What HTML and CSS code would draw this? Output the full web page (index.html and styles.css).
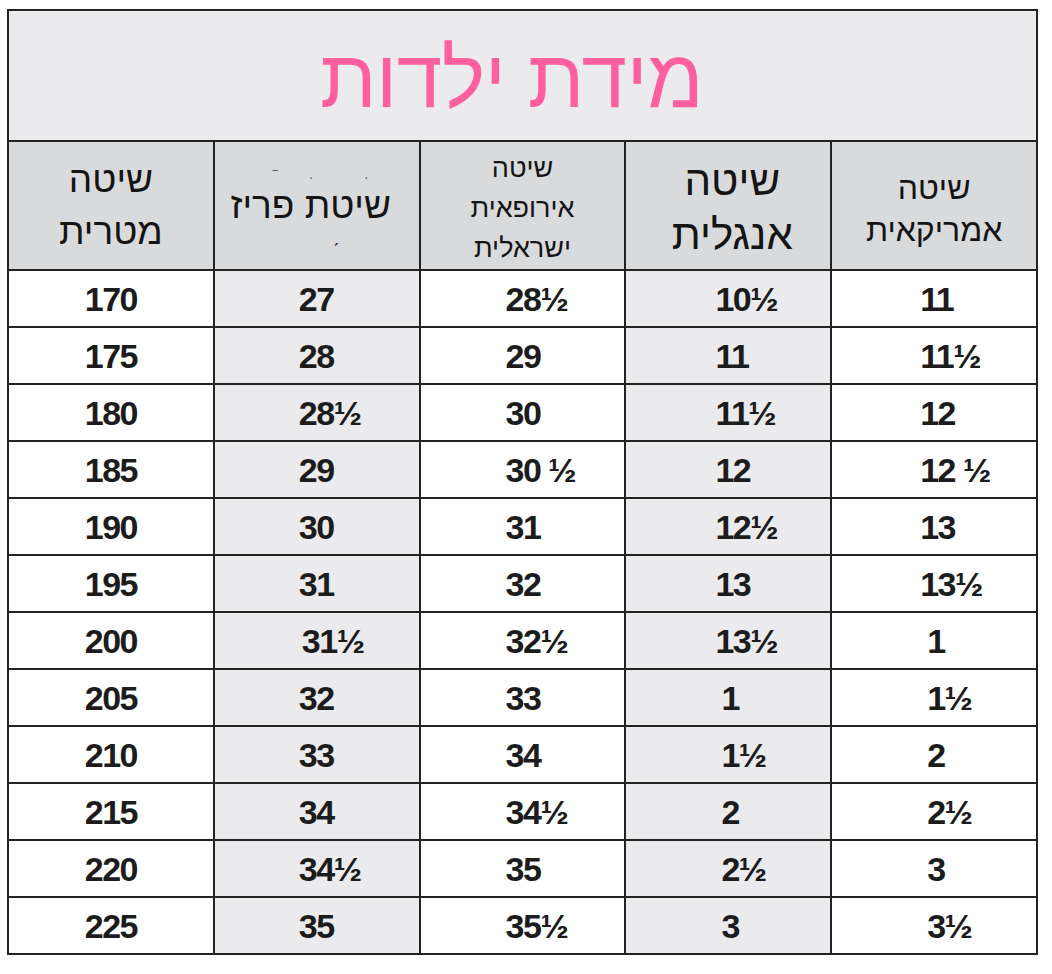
FILE: index.html
```html
<!DOCTYPE html>
<html lang="he" dir="rtl">
<head>
<meta charset="utf-8">
<title>מידת ילדות</title>
<link rel="stylesheet" href="styles.css">
</head>
<body>
<div class="chart">
  <div class="title">מידת ילדות</div>

  <div class="head head-us">שיטה<br>אמריקאית</div>
  <div class="head head-uk">שיטה<br>אנגלית</div>
  <div class="head head-eu">שיטה<br>אירופאית<br>ישראלית</div>
  <div class="head head-paris">
    <span class="marks-top">‾&nbsp;&nbsp;&nbsp;&nbsp;&nbsp;&nbsp;&nbsp;&nbsp;·&nbsp;&nbsp;&nbsp;&nbsp;&nbsp;&nbsp;&nbsp;&nbsp;&nbsp;&nbsp;&nbsp;&nbsp;&nbsp;·</span>
    <span class="paris-text">שיטת פריז</span>
    <span class="marks-bottom">ˏ</span>
  </div>
  <div class="head head-metric">שיטה<br>מטרית</div>

  <div class="cell c-us">11</div><div class="cell c-uk alt">10½</div><div class="cell c-eu">28½</div><div class="cell c-paris alt">27</div><div class="cell c-metric">170</div>
  <div class="cell c-us">11½</div><div class="cell c-uk alt">11</div><div class="cell c-eu">29</div><div class="cell c-paris alt">28</div><div class="cell c-metric">175</div>
  <div class="cell c-us">12</div><div class="cell c-uk alt">11½</div><div class="cell c-eu">30</div><div class="cell c-paris alt">28½</div><div class="cell c-metric">180</div>
  <div class="cell c-us">12 ½</div><div class="cell c-uk alt">12</div><div class="cell c-eu">30 ½</div><div class="cell c-paris alt">29</div><div class="cell c-metric">185</div>
  <div class="cell c-us">13</div><div class="cell c-uk alt">12½</div><div class="cell c-eu">31</div><div class="cell c-paris alt">30</div><div class="cell c-metric">190</div>
  <div class="cell c-us">13½</div><div class="cell c-uk alt">13</div><div class="cell c-eu">32</div><div class="cell c-paris alt">31</div><div class="cell c-metric">195</div>
  <div class="cell c-us single">1</div><div class="cell c-uk alt">13½</div><div class="cell c-eu">32½</div><div class="cell c-paris alt shift">31½</div><div class="cell c-metric">200</div>
  <div class="cell c-us single">1½</div><div class="cell c-uk alt single">1</div><div class="cell c-eu">33</div><div class="cell c-paris alt">32</div><div class="cell c-metric">205</div>
  <div class="cell c-us single">2</div><div class="cell c-uk alt single">1½</div><div class="cell c-eu">34</div><div class="cell c-paris alt">33</div><div class="cell c-metric">210</div>
  <div class="cell c-us single">2½</div><div class="cell c-uk alt single">2</div><div class="cell c-eu">34½</div><div class="cell c-paris alt">34</div><div class="cell c-metric">215</div>
  <div class="cell c-us single">3</div><div class="cell c-uk alt single">2½</div><div class="cell c-eu">35</div><div class="cell c-paris alt">34½</div><div class="cell c-metric">220</div>
  <div class="cell c-us single">3½</div><div class="cell c-uk alt single">3</div><div class="cell c-eu">35½</div><div class="cell c-paris alt">35</div><div class="cell c-metric">225</div>
</div>
</body>
</html>
```

FILE: styles.css
```css
html, body {
  margin: 0;
  padding: 0;
  background: #ffffff;
}

body {
  font-family: "Liberation Sans", "DejaVu Sans", Arial, sans-serif;
  color: #1c1c1c;
}

.chart {
  margin: 9px auto 0 7px;
  width: 1031px;
  box-sizing: border-box;
  display: grid;
  grid-template-columns: repeat(5, 1fr);
  grid-template-rows: 129px 127px repeat(12, 55px);
  gap: 2px;
  padding: 2px;
  background: #232323;
}

.title {
  grid-column: 1 / -1;
  background: #ebebed;
  color: #ff5f9e;
  font-size: 82px;
  display: flex;
  align-items: center;
  justify-content: center;
  padding-right: 22px;
  padding-top: 6px;
  box-sizing: border-box;
  letter-spacing: -0.5px;
}

.head {
  background: #d9dadc;
  display: flex;
  flex-direction: column;
  align-items: center;
  justify-content: center;
  text-align: center;
  color: #141414;
}

.head-us {
  font-size: 32px;
  line-height: 42px;
  padding-top: 6px;
  box-sizing: border-box;
}

.head-uk {
  font-size: 42px;
  line-height: 54px;
  padding-left: 8px;
  padding-top: 4px;
  box-sizing: border-box;
}

.head-eu {
  font-size: 27px;
  line-height: 40px;
  padding-top: 4px;
  box-sizing: border-box;
}

.head-metric {
  font-size: 37px;
  line-height: 52px;
  box-sizing: border-box;
}

.head-paris {
  padding-right: 12px;
  box-sizing: border-box;
}

.paris-text {
  font-size: 37px;
  line-height: 44px;
}

.marks-top {
  font-size: 14px;
  line-height: 14px;
  color: #555;
  height: 14px;
  direction: ltr;
  margin-left: 20px;
}

.marks-bottom {
  font-size: 20px;
  line-height: 14px;
  height: 14px;
  color: #333;
  margin-left: 50px;
}

.cell {
  background: #ffffff;
  direction: ltr;
  text-align: left;
  font-weight: bold;
  font-size: 34px;
  letter-spacing: -1.5px;
  display: flex;
  align-items: center;
  padding-top: 2px;
  box-sizing: border-box;
  color: #1c1c1c;
}

.cell.alt {
  background: #ebebed;
}

.c-metric {
  justify-content: center;
}

.c-paris { padding-left: 84px; }
.c-paris.shift { padding-left: 87px; }
.c-eu { padding-left: 85px; }
.c-uk { padding-left: 89px; }
.c-uk.single { padding-left: 95px; }
.c-us { padding-left: 88px; }
.c-us.single { padding-left: 95px; }
```
